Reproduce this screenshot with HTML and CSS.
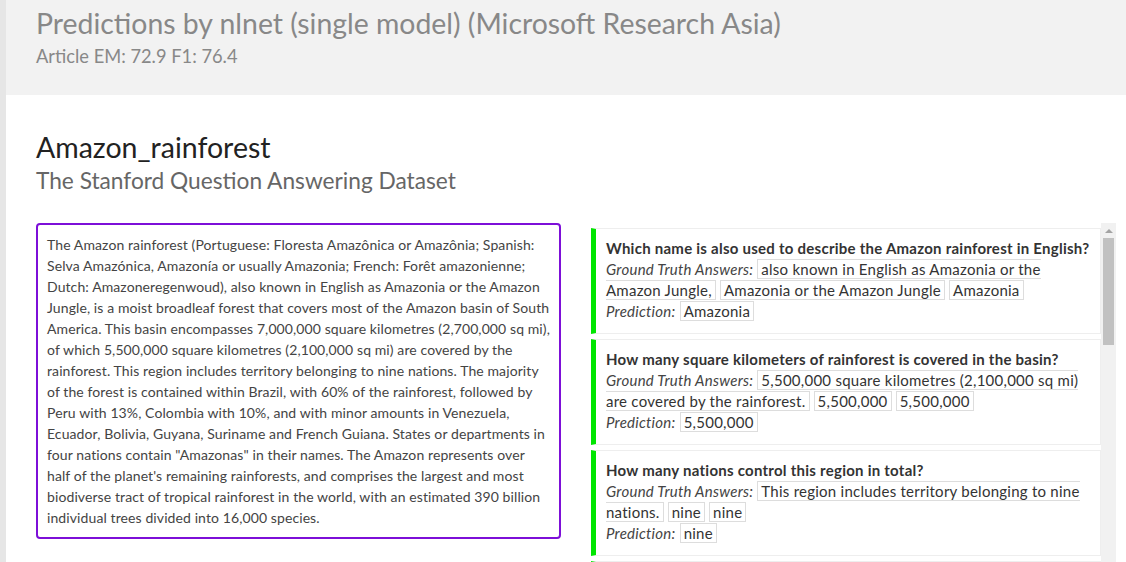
FILE: index.html
```html
<!DOCTYPE html>
<html>
<head>
<meta charset="utf-8">
<link rel="stylesheet" href="styles.css">
</head>
<body>
<div class="page">
  <header class="top">
    <h1 class="top-title">Predictions by nlnet (single model) (Microsoft Research Asia)</h1>
    <div class="top-sub">Article EM: 72.9 F1: 76.4</div>
  </header>
  <main class="main">
    <h2 class="article-title">Amazon_rainforest</h2>
    <div class="dataset">The Stanford Question Answering Dataset</div>
    <div class="cols">
      <div class="passage">The Amazon rainforest (Portuguese: Floresta Amazônica or Amazônia; Spanish: Selva Amazónica, Amazonía or usually Amazonia; French: Forêt amazonienne; Dutch: Amazoneregenwoud), also known in English as Amazonia or the Amazon Jungle, is a moist broadleaf forest that covers most of the Amazon basin of South America. This basin encompasses 7,000,000 square kilometres (2,700,000 sq mi), of which 5,500,000 square kilometres (2,100,000 sq mi) are covered by the rainforest. This region includes territory belonging to nine nations. The majority of the forest is contained within Brazil, with 60% of the rainforest, followed by Peru with 13%, Colombia with 10%, and with minor amounts in Venezuela, Ecuador, Bolivia, Guyana, Suriname and French Guiana. States or departments in four nations contain "Amazonas" in their names. The Amazon represents over half of the planet's remaining rainforests, and comprises the largest and most biodiverse tract of tropical rainforest in the world, with an estimated 390 billion individual trees divided into 16,000 species.</div>
      <div class="questions">
        <div class="qa-list">
          <div class="qa">
            <div class="q">Which name is also used to describe the Amazon rainforest in English?</div>
            <div><span class="label">Ground Truth Answers:</span> <span class="chip">also known in English as Amazonia or the Amazon Jungle,</span> <span class="chip">Amazonia or the Amazon Jungle</span> <span class="chip">Amazonia</span></div>
            <div><span class="label">Prediction:</span> <span class="chip">Amazonia</span></div>
          </div>
          <div class="qa">
            <div class="q">How many square kilometers of rainforest is covered in the basin?</div>
            <div><span class="label">Ground Truth Answers:</span> <span class="chip">5,500,000 square kilometres (2,100,000 sq mi) are covered by the rainforest.</span> <span class="chip">5,500,000</span> <span class="chip">5,500,000</span></div>
            <div><span class="label">Prediction:</span> <span class="chip">5,500,000</span></div>
          </div>
          <div class="qa">
            <div class="q">How many nations control this region in total?</div>
            <div><span class="label">Ground Truth Answers:</span> <span class="chip">This region includes territory belonging to nine nations.</span> <span class="chip">nine</span> <span class="chip">nine</span></div>
            <div><span class="label">Prediction:</span> <span class="chip">nine</span></div>
          </div>
          <div class="qa">
            <div class="q">What is the estimated number of individual trees in the Amazon?</div>
            <div><span class="label">Ground Truth Answers:</span> <span class="chip">390 billion</span> <span class="chip">390 billion</span></div>
            <div><span class="label">Prediction:</span> <span class="chip">390 billion</span></div>
          </div>
        </div>
        <div class="scrollbar">
          <div class="sb-arrow"></div>
          <div class="sb-thumb"></div>
        </div>
      </div>
    </div>
  </main>
</div>
</body>
</html>
```

FILE: styles.css
```css
html, body {
  margin: 0;
  padding: 0;
}
body {
  background: #e6e6e6;
  font-family: Lato, "Open Sans", sans-serif;
  color: #333;
  height: 562px;
  overflow: hidden;
}
.page {
  margin-left: 6px;
  background: #fff;
  min-height: 562px;
}
.top {
  background: #f2f2f2;
  height: 95px;
  box-sizing: border-box;
  padding: 4px 30px 0;
}
.top-title {
  margin: 0;
  font-size: 28.4px;
  font-weight: 400;
  line-height: 38px;
  color: #888;
}
.top-sub {
  margin-top: 2px;
  font-size: 18.3px;
  line-height: 24px;
  color: #888;
}
.main {
  padding: 34px 30px 0;
}
.article-title {
  margin: 0;
  font-size: 28.5px;
  font-weight: 400;
  line-height: 36px;
  color: #222;
}
.dataset {
  font-size: 22.7px;
  line-height: 32px;
  color: #666;
  margin-bottom: 26px;
}
.cols {
  display: grid;
  grid-template-columns: 525px 526px;
  column-gap: 29px;
  align-items: start;
}
.passage {
  border: 2px solid #7d0fd8;
  border-radius: 4px;
  padding: 9px;
  font-size: 14px;
  letter-spacing: 0.1px;
  line-height: 21px;
  color: #444;
}
.questions {
  display: flex;
  height: 360px;
}
.qa-list {
  flex: 1;
  min-width: 0;
  overflow: hidden;
  padding-top: 5px;
}
.qa {
  margin: 0 0 5px 1px;
  border: 1px solid #eee;
  border-left: 5px solid #00e600;
  padding: 9px 10px 11px;
  font-size: 15px;
  letter-spacing: 0.25px;
  line-height: 21px;
  color: #333;
}
.q {
  font-weight: 700;
}
.label {
  font-style: italic;
  color: #444;
}
.chip {
  border: 1px solid #ddd;
  padding: 0 3px;
}
.scrollbar {
  width: 15px;
  flex: none;
  background: #f1f1f1;
  display: flex;
  flex-direction: column;
  align-items: center;
}
.sb-arrow {
  margin-top: 6px;
  width: 0;
  height: 0;
  border-left: 4px solid transparent;
  border-right: 4px solid transparent;
  border-bottom: 4px solid #a3a3a3;
}
.sb-thumb {
  margin-top: 5px;
  width: 11px;
  height: 107px;
  background: #c1c1c1;
}
```
